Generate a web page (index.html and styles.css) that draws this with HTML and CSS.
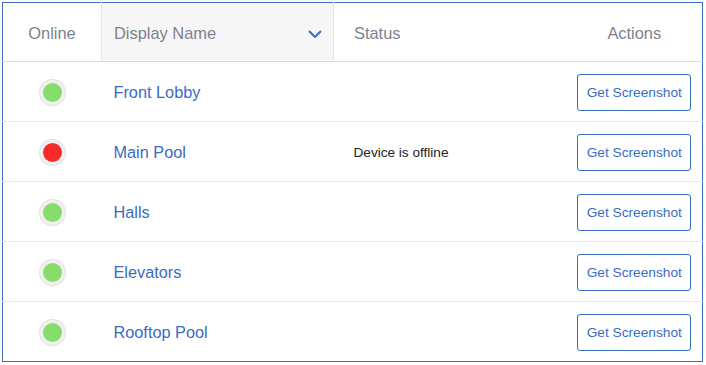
FILE: index.html
```html
<!DOCTYPE html>
<html lang="en">

<head>
    <meta charset="UTF-8">
    <meta name="viewport" content="width=device-width, initial-scale=1.0">
    <title>Devices</title>
    <link rel="stylesheet" href="styles.css">
</head>

<body>
    <table class="devices">
        <thead>
            <tr>
                <th class="col-online">Online</th>
                <th class="col-name sorted">
                    <div class="sort-head">
                        <span>Display Name</span>
                        <svg class="chevron" width="14" height="8" viewBox="0 0 14 8">
                            <path d="M1 1l6 6 6-6" fill="none" stroke="#3a6cc0" stroke-width="2" />
                        </svg>
                    </div>
                </th>
                <th class="col-status">Status</th>
                <th class="col-actions">Actions</th>
            </tr>
        </thead>
        <tbody>
            <tr>
                <td class="col-online"><span class="dot on"></span></td>
                <td class="col-name"><a href="#">Front Lobby</a></td>
                <td class="col-status"></td>
                <td class="col-actions"><button class="shot-btn">Get Screenshot</button></td>
            </tr>
            <tr>
                <td class="col-online"><span class="dot off"></span></td>
                <td class="col-name"><a href="#">Main Pool</a></td>
                <td class="col-status">Device is offline</td>
                <td class="col-actions"><button class="shot-btn">Get Screenshot</button></td>
            </tr>
            <tr>
                <td class="col-online"><span class="dot on"></span></td>
                <td class="col-name"><a href="#">Halls</a></td>
                <td class="col-status"></td>
                <td class="col-actions"><button class="shot-btn">Get Screenshot</button></td>
            </tr>
            <tr>
                <td class="col-online"><span class="dot on"></span></td>
                <td class="col-name"><a href="#">Elevators</a></td>
                <td class="col-status"></td>
                <td class="col-actions"><button class="shot-btn">Get Screenshot</button></td>
            </tr>
            <tr>
                <td class="col-online"><span class="dot on"></span></td>
                <td class="col-name"><a href="#">Rooftop Pool</a></td>
                <td class="col-status"></td>
                <td class="col-actions"><button class="shot-btn">Get Screenshot</button></td>
            </tr>
        </tbody>
    </table>
</body>

</html>
```

FILE: styles.css
```css
:root {
    --blue: #3a6cc0;
    --head-text: #7b8390;
    --line: #e9e9e9;
}

* {
    margin: 0;
    padding: 0;
    box-sizing: border-box;
}

body {
    font-family: 'Liberation Sans', Arial, sans-serif;
    background-color: #ffffff;
    padding: 2px;
}

.devices {
    width: 701px;
    border-collapse: collapse;
    border: 1px solid var(--blue);
    table-layout: fixed;
}

.devices th {
    height: 59px;
    padding-top: 2px;
    font-size: 16.4px;
    font-weight: normal;
    color: var(--head-text);
    text-align: left;
    border-bottom: 1px solid #dcdcdc;
}

.devices td {
    height: 60px;
    padding-top: 2px;
    border-bottom: 1px solid var(--line);
}

.devices tr:last-child td {
    border-bottom: none;
}

.col-online {
    width: 99px;
    text-align: center !important;
}

.col-name {
    width: 232px;
    padding-left: 12px;
}

th.col-name.sorted {
    background-color: #f6f6f6;
    border-left: 1px solid #e4e4e4;
    border-right: 1px solid #e4e4e4;
}

.sort-head {
    display: flex;
    align-items: center;
    justify-content: space-between;
    padding-right: 11px;
}

.chevron {
    display: block;
    margin-top: 1px;
}

.col-status {
    width: 233px;
    padding-left: 20px;
    font-size: 13.6px;
    color: #222222;
}

.col-actions {
    text-align: center !important;
}

.col-name a {
    color: var(--blue);
    text-decoration: none;
    font-size: 16.3px;
}

.dot {
    display: inline-block;
    width: 19px;
    height: 19px;
    border-radius: 50%;
    border: 3px solid #f1f1f1;
    box-shadow: 0 0 0 1px #e2e2e2;
    box-sizing: content-box;
    vertical-align: middle;
}

.dot.on {
    background-color: #88dd6a;
}

.dot.off {
    background-color: #f72a2a;
}

.shot-btn {
    width: 114px;
    height: 37px;
    background: #ffffff;
    border: 1px solid var(--blue);
    border-radius: 3px;
    color: var(--blue);
    font-family: 'Liberation Sans', Arial, sans-serif;
    font-size: 13.7px;
    cursor: pointer;
    vertical-align: middle;
}
```
